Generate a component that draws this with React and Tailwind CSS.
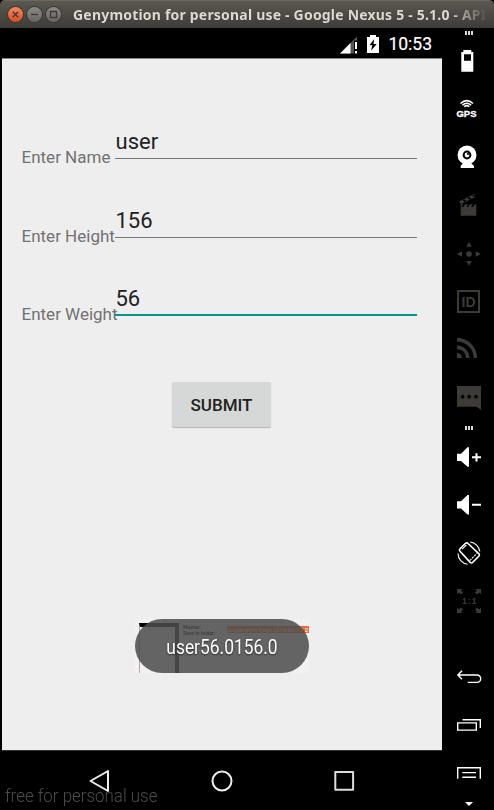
import React from 'react';

const roboto = "font-['Roboto','Liberation_Sans',sans-serif]";

function Slot({ children, color = 'text-white' }) {
  return (
    <div className={`flex h-12 w-6 shrink-0 items-center ${color}`}>
      <svg width="24" height="24" viewBox="0 0 24 24" fill="currentColor" className="overflow-visible">
        {children}
      </svg>
    </div>
  );
}

function Grip() {
  return (
    <div className="ml-2 flex h-1 gap-px">
      <div className="w-[2px] bg-[#ddd]" />
      <div className="w-[2px] bg-[#ddd]" />
      <div className="w-[2px] bg-[#ddd]" />
    </div>
  );
}

function Field({ label, value, active, className }) {
  return (
    <div className={`flex h-[30px] ${className}`}>
      <div className="w-[93.5px] shrink-0 pt-[18px] text-[17px] leading-5 whitespace-nowrap text-[#727272]">{label}</div>
      <div
        className={`h-[30px] w-[302px] pl-[0.5px] text-[22px] leading-[26px] text-[#212121] ${
          active ? 'border-b-2 border-[#009688]' : 'border-b border-[#777]'
        }`}
      >
        {value}
      </div>
    </div>
  );
}

const dim = 'text-[#3c3b37]';

function Sidebar() {
  return (
    <div className="flex h-full w-[52px] flex-col bg-black pl-[15px]">
      <div className="h-[9px] pt-[3px]"><Grip /></div>
      <Slot>
        <path fillRule="evenodd" d="M6.3 1h8v2h2v19.7h-12V3h2zM7 5.3v6.4h7V5.3z" />
      </Slot>
      <Slot>
        <g fill="none" stroke="currentColor" strokeWidth="1.5">
          <path d="M3.5 6.5Q9.7 .8 16 6.5M5.3 8.2Q9.7 4.2 14.2 8.2M7.2 9.8Q9.7 7.4 12.3 9.8" />
        </g>
        <text x="-.5" y="20" textLength="20" lengthAdjust="spacingAndGlyphs" fontFamily="Liberation Sans" fontWeight="700" fontSize="9.8" stroke="currentColor" strokeWidth=".3">GPS</text>
      </Slot>
      <Slot>
        <circle cx="10" cy="10" r="9.5" />
        <circle cx="10" cy="10" r="3.4" fill="none" stroke="black" strokeWidth="2" />
        <circle cx="11" cy="9" r="1.1" fill="black" />
        <path d="M6 18h8l3 3v2H3.7v-2z" />
      </Slot>
      <Slot color={dim}>
        <path d="M3.7 14h15.6v8.7H3.7zM3.7 11.3h2.5l-2 2.7h-.5zM8.2 11.3h3L9.2 14h-3zM13 11.3h3L14 14h-3zM18 11.3h1.3V14h-3.3z" />
        <path d="M2.5 8.6l3-1.5 2.3 1.9-4 2.1zM7.2 6.2l3-1.5 2.3 1.9-3 1.5zM12 3.8l3-1.5 2.3 1.9-3 1.5zM16.2 1.6l1-.5 1.2 2.4z" />
        <path fill="none" stroke="currentColor" strokeWidth=".5" d="M2.5 8.6L17.2 1.1M3.8 11.1L18.4 3.5" />
      </Slot>
      <Slot color={dim}>
        <circle cx="12" cy="13" r="2.8" />
        <path d="M9.2 5.8L12 1l2.8 4.8zM9.2 20L12 24.8 14.8 20zM5 10.3v5.4L0 13zM18.8 10.3v5.4L23.8 13z" />
      </Slot>
      <Slot color={dim}>
        <rect x="1" y="2" width="21" height="21" fill="none" stroke="currentColor" strokeWidth="2" />
        <text x="4.6" y="18.2" textLength="14" lengthAdjust="spacingAndGlyphs" fontFamily="Liberation Sans" fontWeight="700" fontSize="15.5">ID</text>
      </Slot>
      <Slot color={dim}>
        <path d="M0 16a5 5 0 0 1 5 5H0z" />
        <path fill="none" stroke="currentColor" strokeWidth="3.4" d="M0 10.2A10.8 10.8 0 0 1 10.8 21M0 2.7A18.3 18.3 0 0 1 18.3 21" />
      </Slot>
      <Slot color={dim}>
        <path d="M0 1h24v24l-4.5-3.3H0z" />
        <g fill="black"><circle cx="5.6" cy="11.7" r="1.9" /><circle cx="12.2" cy="11.7" r="1.9" /><circle cx="19" cy="11.7" r="1.9" /></g>
      </Slot>
      <div className="h-3 pt-[5px]"><Grip /></div>
      <Slot>
        <path d="M0 8.7h4l6.5-6.4H12v19.4h-1.5L4 16H0zM15 11.3h3.5V8.2h2v3.1H24v2h-3.5v3.3h-2v-3.3H15z" />
      </Slot>
      <Slot>
        <path d="M0 8.2h4L10.5 2H12v19.4h-1.5L4 15.5H0zM15 10.8h9v2h-9z" />
      </Slot>
      <Slot>
        <g fill="none" stroke="currentColor">
          <path strokeWidth="1.6" strokeLinejoin="round" d="M8.3 2.5Q9.7 1.2 11 2.5L22 12.8Q23 14 21.8 15.2L15.8 21.2Q14.4 22.6 13.2 21.4L3 10.3Q1.8 9 3 7.8z" />
          <path strokeWidth="1.1" d="M13.2 1A11 11 0 0 1 22.8 10.5M1 12.5A11 11 0 0 0 10.5 23.2M5 8.2l4.3-4.2" />
          <path strokeWidth="1.2" strokeDasharray="2 1" d="M13 19.3l6.8-6.8" />
        </g>
      </Slot>
      <Slot color={dim}>
        <path d="M0 0h5.3L4 1.6l2 2L3.8 5.6l-2-2L0 5.3zM24 0h-5.3L20 1.6l-2 2 2.2 2 2-2L24 5.3zM0 24h5.3L4 22.4l2-2-2.2-2-2 2L0 18.7zM24 24h-5.3l1.3-1.6-2-2 2.2-2 2 2 1.8-1.7z" />
        <text x="5" y="15.2" textLength="14.5" fontFamily="Liberation Sans" fontWeight="700" fontSize="8.5">1:1</text>
      </Slot>
      <div className="h-7 shrink-0" />
      <Slot>
        <path fill="none" stroke="currentColor" strokeWidth="1.4" d="M5 5.7L.8 10 5 14.3M.8 10H20a3.7 3.7 0 0 1 0 7.4H10.7" />
      </Slot>
      <Slot>
        <path fill="none" stroke="currentColor" strokeWidth="1.4" d="M.7 9.9h18.6v7.2H.7zM5.5 6.7h17.8V15" />
      </Slot>
      <Slot>
        <path fill="none" stroke="currentColor" strokeWidth="1.4" d="M.7 17.8V6.7h22.6v11.1M5.3 11.6H19M5.3 16.3H19" />
      </Slot>
      <svg width="8" height="4" viewBox="0 0 8 4" className="mt-[5px] ml-2 shrink-0"><path d="M0 0h8L4 4z" fill="white" /></svg>
    </div>
  );
}

function WindowButton({ children, close }) {
  return (
    <div className={`flex size-[15px] items-center justify-center rounded-full shadow-[0_0_0_1px_#3a3934] ${close ? 'bg-linear-to-b from-[#f4865f] to-[#df4a16]' : 'bg-linear-to-b from-[#8b8a82] to-[#66655f]'}`}>
      <svg width="15" height="15" viewBox="0 0 15 15" fill="none" stroke="#3b3a35" strokeWidth="1.3">{children}</svg>
    </div>
  );
}

export default function App() {
  return (
    <div className={`flex h-[810px] w-[494px] flex-col overflow-hidden bg-black ${roboto}`}>
      <div className="flex h-7 shrink-0 items-center rounded-t-[5px] border-t border-[#6a685f] bg-linear-to-b from-[#5a5850] to-[#3d3c37] pl-2">
        <div className="flex gap-1">
          <WindowButton close><path d="M4.8 4.8l5.4 5.4M10.2 4.8l-5.4 5.4" /></WindowButton>
          <WindowButton><path d="M4 7.5h7" /></WindowButton>
          <WindowButton><path d="M4.5 4.5h6v6h-6z" /></WindowButton>
        </div>
        <div className="ml-[12px] w-[413px] overflow-hidden bg-linear-to-r from-[#dfdbd2] from-91% to-[#55534c] bg-clip-text font-['Noto_Sans',sans-serif] text-[14px] leading-5 font-bold tracking-[0.2px] whitespace-nowrap text-transparent">
          Genymotion for personal use - Google Nexus 5 - 5.1.0 - API
        </div>
      </div>

      <div className="flex h-[782px]">
        <div className="relative flex w-[442px] flex-col pl-[2px]">
          <div className="flex h-[30px] shrink-0 items-center justify-end pr-[10px] text-white">
            <svg width="18" height="18" viewBox="0 0 18 18" className="mt-[3px] mr-[9px]">
              <path d="M0 17.5L17 .5v4h-3v13h-4z" fill="#555" />
              <path d="M0 17.5L10.5 7v10.5z" fill="white" />
              <path d="M15 6h2v7h-2zM15 15h2v2.5h-2z" fill="white" />
            </svg>
            <svg width="12" height="18" viewBox="0 0 12 18" className="mt-px mr-[9px]">
              <path d="M3 0h6v2h3v16H0V2h3z" fill="white" />
              <path d="M7.2 4L2.5 10.2h2.7L4.2 15.5 9.7 9H6.5z" fill="black" />
            </svg>
            <span className="pt-[2px] text-[17.5px] leading-5 font-normal [-webkit-text-stroke:0.2px_white]">10:53</span>
          </div>

          <div className="flex h-[693px] w-[440px] shrink-0 flex-col border-t border-b border-t-[#888] border-b-[#333] bg-[#eee] pl-[19.5px]">
            <Field className="mt-[70px]" label="Enter Name" value="user" />
            <Field className="mt-[49px]" label="Enter Height" value="156" />
            <Field className="mt-[48px]" label="Enter Weight" value="56" active />
            <div className="mt-[66px] ml-[150.5px] flex h-[45px] w-[99px] items-center justify-center rounded-[2px] bg-[#d6d7d7] pt-[2px] text-[17px] font-medium text-[#212121] shadow-[0_1px_1px_rgba(0,0,0,0.25)]">
              SUBMIT
            </div>
            <div className="relative mt-[192px] ml-[113.5px] h-[54px] w-[174px]">
              <div className="absolute inset-0 overflow-hidden bg-[#f3f1f0]">
                <div className="absolute top-1 left-1 h-[50px] w-10 border-t-4 border-r-4 border-l border-t-black border-r-[#222] border-l-[#aaa] bg-[#f3f1f0]" />
                <div className="absolute top-[3px] left-[48px] text-[6px] leading-[9px] font-bold">Name:</div>
                <div className="absolute top-[7px] left-[92px] h-[7px] w-[82px] overflow-hidden bg-[#f2693a] text-[6px] leading-[7px] whitespace-nowrap text-white">Screenshot from 2015-03-11 2</div>
                <div className="absolute top-[12px] left-[48px] text-[5px] leading-[5px] font-bold whitespace-nowrap">Save in folder:</div>
              </div>
              <div className="absolute inset-0 flex items-center justify-center rounded-full bg-[#4d4d4d]/86">
                <span className="scale-x-[.87] pt-[2px] text-[20px] leading-6 text-white [text-shadow:0_1px_2px_rgba(0,0,0,0.6)]">user56.0156.0</span>
              </div>
            </div>
          </div>

          <div className="flex h-[59px] items-center pl-[86px]">
            <svg width="24" height="24" viewBox="0 0 24 24" fill="none" stroke="#eee" strokeWidth="2" strokeLinejoin="round"><path d="M20 2v20L2.5 12z" /></svg>
            <svg width="24" height="24" viewBox="0 0 24 24" fill="none" stroke="#eee" strokeWidth="2" className="ml-[98px]"><circle cx="12" cy="12" r="9.5" /></svg>
            <svg width="24" height="24" viewBox="0 0 24 24" fill="none" stroke="#ddd" strokeWidth="2" strokeLinejoin="round" className="ml-[98px]"><path d="M3.3 3h17.8v17.8H3.3z" /></svg>
          </div>
          <div className="absolute bottom-[2px] left-[5px] origin-left scale-x-[.89] text-[19px] leading-6 font-light whitespace-nowrap text-[#4c4c4c]">free for personal use</div>
        </div>
        <Sidebar />
      </div>
    </div>
  );
}
